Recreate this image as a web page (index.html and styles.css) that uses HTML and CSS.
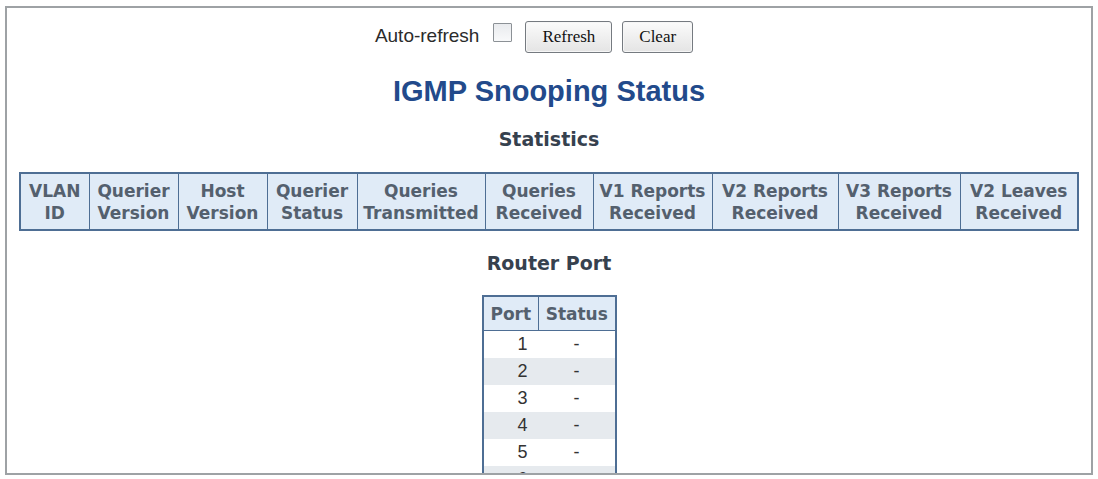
FILE: index.html
```html
<!DOCTYPE html>
<html>
<head>
<meta charset="utf-8">
<title>IGMP Snooping Status</title>
<link rel="stylesheet" href="styles.css">
</head>
<body>
<div class="frame">
  <div class="toolbar">
    <span class="tb-label">Auto-refresh</span>
    <input type="checkbox" class="tb-check">
    <button class="tb-btn btn-refresh">Refresh</button>
    <button class="tb-btn btn-clear">Clear</button>
  </div>
  <h1 class="title">IGMP Snooping Status</h1>
  <h2 class="section">Statistics</h2>
  <table class="stats">
    <colgroup>
      <col class="c-vlan"><col class="c-qver"><col class="c-hver"><col class="c-qst">
      <col class="c-qtx"><col class="c-qrx"><col class="c-v1"><col class="c-v2">
      <col class="c-v3"><col class="c-lv">
    </colgroup>
    <tr>
      <th>VLAN<br>ID</th>
      <th>Querier<br>Version</th>
      <th>Host<br>Version</th>
      <th>Querier<br>Status</th>
      <th>Queries<br>Transmitted</th>
      <th>Queries<br>Received</th>
      <th>V1 Reports<br>Received</th>
      <th>V2 Reports<br>Received</th>
      <th>V3 Reports<br>Received</th>
      <th>V2 Leaves<br>Received</th>
    </tr>
  </table>
  <h2 class="section section-router">Router Port</h2>
  <table class="ports">
    <colgroup><col class="c-port"><col class="c-status"></colgroup>
    <tr><th>Port</th><th>Status</th></tr>
    <tr><td class="num">1</td><td>-</td></tr>
    <tr><td class="num">2</td><td>-</td></tr>
    <tr><td class="num">3</td><td>-</td></tr>
    <tr><td class="num">4</td><td>-</td></tr>
    <tr><td class="num">5</td><td>-</td></tr>
    <tr><td class="num">6</td><td>-</td></tr>
  </table>
</div>
</body>
</html>
```
FILE: styles.css
```css
html, body {
  margin: 0;
  padding: 0;
  background: #ffffff;
}
body {
  padding: 6px 0 0 5px;
  height: 479px;
  box-sizing: border-box;
  overflow: hidden;
}
.frame {
  width: 1088px;
  height: 469px;
  box-sizing: border-box;
  border: 2px solid #9ea2a5;
  background: #ffffff;
  overflow: hidden;
  text-align: center;
}
.toolbar {
  display: flex;
  justify-content: center;
  align-items: flex-start;
  margin-top: 13px;
  padding-right: 30px;
  height: 32px;
}
.tb-label {
  font-family: "Liberation Sans", Arial, sans-serif;
  font-size: 19px;
  line-height: 22px;
  color: #2b2b2b;
  margin-top: 4px;
}
.tb-check {
  -webkit-appearance: none;
  appearance: none;
  width: 19px;
  height: 19px;
  margin: 2px 0 0 14px;
  box-sizing: border-box;
  border: 1px solid #8c9196;
  border-radius: 1px;
  background: linear-gradient(#e9ebee, #f8f9fa);
}
.tb-btn {
  font-family: "Liberation Serif", "Times New Roman", serif;
  font-size: 17px;
  height: 32px;
  padding: 0 16px;
  border: 1px solid #757a80;
  border-radius: 3px;
  background: linear-gradient(#fbfbfb, #e4e4e4);
  color: #111;
  box-shadow: inset 0 0 0 1px #f6f6f6;
}
.btn-refresh { margin-left: 13px; }
.btn-clear { margin-left: 10px; }

.title {
  margin: 22px 0 0 0;
  font-family: "Liberation Sans", Arial, sans-serif;
  font-weight: bold;
  font-size: 29px;
  line-height: 32px;
  color: #224a8b;
}
.section {
  margin: 20px 0 0 0;
  font-family: "DejaVu Sans", Verdana, sans-serif;
  font-weight: bold;
  font-size: 19px;
  line-height: 24px;
  color: #36414e;
}
.section-router { margin-top: 20px; }

table {
  border-collapse: collapse;
  margin-left: auto;
  margin-right: auto;
}
.stats {
  margin-top: 21px;
  width: 1058px;
  table-layout: fixed;
  border: 2px solid #4e6e94;
}
.c-vlan { width: 69px; }
.c-qver { width: 89px; }
.c-hver { width: 89px; }
.c-qst { width: 90px; }
.c-qtx { width: 128px; }
.c-qrx { width: 108px; }
.c-v1 { width: 119px; }
.c-v2 { width: 126px; }
.c-v3 { width: 122px; }
.c-lv { width: 118px; }

th {
  background: #e0ebf7;
  font-family: "DejaVu Sans", Verdana, sans-serif;
  font-weight: bold;
  font-size: 17px;
  line-height: 22px;
  color: #54606e;
  text-align: center;
  border: 1px solid #4e6e94;
  white-space: nowrap;
  padding: 6px 0 5px 0;
}
.ports {
  margin-top: 20px;
  width: 135px;
  table-layout: fixed;
  border: 2px solid #4e6e94;
}
.c-port { width: 56px; }
.c-status { width: 77px; }
.ports td {
  font-family: "Liberation Sans", Arial, sans-serif;
  font-size: 18px;
  line-height: 27px;
  height: 27px;
  padding: 0;
  color: #333;
  text-align: center;
}
.ports td.num {
  text-align: right;
  padding-right: 11px;
}
.ports tr:nth-child(odd) td {
  background: #e6eaee;
}
.ports tr:nth-child(even) td {
  background: #ffffff;
}
```
